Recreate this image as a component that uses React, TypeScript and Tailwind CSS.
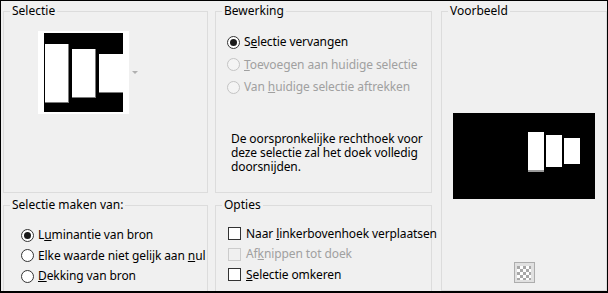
import React from "react";

const font = { fontFamily: '"Noto Sans", "Open Sans", sans-serif' };

function Group({ title, className, children }: { title: string; className?: string; children?: React.ReactNode }) {
  return (
    <div className={"relative border border-[#dcdcdc] " + (className ?? "")}>
      <span className="absolute left-[6px] top-[-9px] whitespace-nowrap bg-[#f0f0f0] px-[2px] text-[12px] leading-[16px] text-black">
        {title}
      </span>
      {children}
    </div>
  );
}

function Radio({ checked, disabled, children }: { checked?: boolean; disabled?: boolean; children: React.ReactNode }) {
  return (
    <div className={"flex items-center gap-[4px] " + (disabled ? "text-[#a0a0a0]" : "text-black")}>
      <span
        className={
          "flex h-[13px] w-[13px] shrink-0 items-center justify-center rounded-full border " +
          (disabled ? "border-[#c4c4c4] bg-[#f4f4f4]" : "border-[#333333] bg-white")
        }
      >
        {checked && <span className="h-[7px] w-[7px] rounded-full bg-[#1a1a1a]" />}
      </span>
      <span className="whitespace-nowrap text-[12px] leading-[16px] tracking-[-0.1px]">{children}</span>
    </div>
  );
}

function Check({ disabled, children }: { disabled?: boolean; children: React.ReactNode }) {
  return (
    <div className={"flex items-center gap-[5px] " + (disabled ? "text-[#a0a0a0]" : "text-black")}>
      <span
        className={
          "h-[13px] w-[13px] shrink-0 border " + (disabled ? "border-[#cccccc] bg-[#f0f0f0]" : "border-[#333333] bg-white")
        }
      />
      <span className="whitespace-nowrap text-[12px] leading-[16px] tracking-[-0.1px]">{children}</span>
    </div>
  );
}

export default function App() {
  return (
    <div
      style={font}
      className="flex h-[293px] w-[608px] overflow-hidden border-x border-t border-b-2 border-black bg-[#f0f0f0] pl-[2px] pt-[10px]"
    >
      {/* linker kolom */}
      <div className="flex w-[205px] shrink-0 flex-col gap-[12px]">
        <Group title="Selectie" className="h-[182px]">
          <div className="ml-[34px] mt-[19px] flex items-center gap-[3px]">
            <div className="bg-white px-[6px] py-[2px]">
              <svg width="79" height="79" viewBox="0 0 79 79">
                <rect width="79" height="79" fill="#000" />
                <rect x="1" y="11" width="24" height="59" fill="#7a7a7a" />
                <rect x="1" y="11" width="23" height="58" fill="#fff" />
                <rect x="28" y="16" width="24" height="49" fill="#7a7a7a" />
                <rect x="28" y="16" width="23" height="48" fill="#fff" />
                <rect x="55" y="21" width="24" height="39" fill="#7a7a7a" />
                <rect x="55" y="21" width="24" height="38" fill="#fff" />
              </svg>
            </div>
            <svg width="6" height="3" viewBox="0 0 6 3">
              <path d="M0 0 H6 L3 3 Z" fill="#b0b0b0" />
            </svg>
          </div>
        </Group>
        <Group title="Selectie maken van:" className="flex-1 border-b-0">
          <div className="ml-[17px] mt-[19px] flex flex-col">
            <div className="flex h-[20px] items-center">
              <Radio checked>
                L<u>u</u>minantie van bron
              </Radio>
            </div>
            <div className="flex h-[21px] items-center">
              <Radio>
                Elke waarde niet gelijk aan <u>n</u>ul
              </Radio>
            </div>
            <div className="flex h-[20px] items-center">
              <Radio>
                <u>D</u>ekking van bron
              </Radio>
            </div>
          </div>
        </Group>
      </div>

      {/* middelste kolom */}
      <div className="ml-[7px] flex w-[217px] shrink-0 flex-col gap-[12px]">
        <Group title="Bewerking" className="h-[182px]">
          <div className="ml-[11px] mt-[19px] flex flex-col">
            <div className="flex h-[22px] items-center">
              <Radio checked>
                S<u>e</u>lectie vervangen
              </Radio>
            </div>
            <div className="flex h-[23px] items-center">
              <Radio disabled>
                <u>T</u>oevoegen aan huidige selectie
              </Radio>
            </div>
            <div className="flex h-[22px] items-center">
              <Radio disabled>
                Van <u>h</u>uidige selectie aftrekken
              </Radio>
            </div>
          </div>
          <p className="ml-[15px] mt-[34px] whitespace-nowrap text-[12px] leading-[14px] tracking-[-0.1px] text-black">
            De oorspronkelijke rechthoek voor
            <br />
            deze selectie zal het doek volledig
            <br />
            doorsnijden.
          </p>
        </Group>
        <Group title="Opties" className="flex-1 border-b-0">
          <div className="ml-[12px] mt-[17px] flex flex-col">
            <div className="flex h-[21px] items-center">
              <Check>
                Naar <u>l</u>inkerbovenhoek verplaatsen
              </Check>
            </div>
            <div className="flex h-[20px] items-center">
              <Check disabled>
                Af<u>k</u>nippen tot doek
              </Check>
            </div>
            <div className="flex h-[21px] items-center">
              <Check>
                <u>S</u>electie omkeren
              </Check>
            </div>
          </div>
        </Group>
      </div>

      {/* voorbeeld */}
      <div className="ml-[9px] flex w-[166px] shrink-0 flex-col">
        <Group title="Voorbeeld" className="flex h-[280px] flex-col items-center">
          <div className="mt-[101px]">
            <svg width="142" height="86" viewBox="0 0 142 86">
              <rect width="142" height="86" fill="#000" />
              <rect x="75" y="19" width="16" height="40" fill="#9a9a9a" />
              <rect x="75" y="19" width="16" height="38" fill="#fff" />
              <rect x="93" y="22" width="16" height="32" fill="#fff" />
              <rect x="111" y="25" width="16" height="26" fill="#fff" />
            </svg>
          </div>
          <div className="mt-[63px] flex h-[21px] w-[21px] items-center justify-center border border-[#adadad] bg-[#e1e1e1]">
            <svg width="14" height="14" viewBox="0 0 14 14">
              <rect width="14" height="14" fill="#ffffff" />
              <path
                d="M0 0h3v3H0zM6 0h3v3H6zM12 0h2v3h-2zM3 3h3v3H3zM9 3h3v3H9zM0 6h3v3H0zM6 6h3v3H6zM12 6h2v3h-2zM3 9h3v3H3zM9 9h3v3H9zM0 12h3v2H0zM6 12h3v2H6zM12 12h2v2h-2z"
                fill="#a8a8a8"
              />
            </svg>
          </div>
        </Group>
      </div>
    </div>
  );
}
